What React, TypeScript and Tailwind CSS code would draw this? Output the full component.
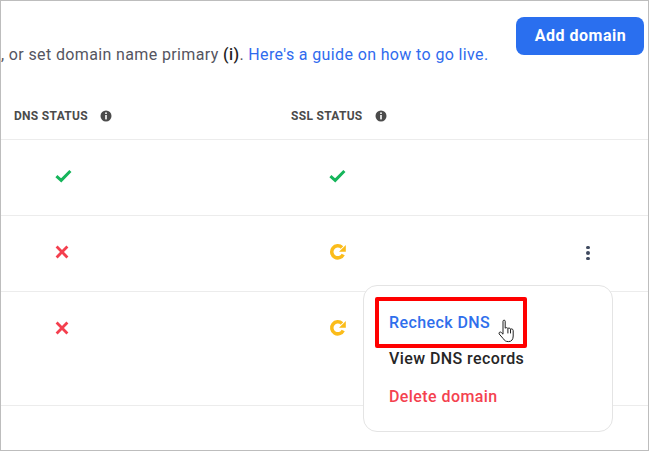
function InfoDot() {
  return (
    <svg width="12" height="12" viewBox="0 0 12 12" className="-mt-[1px] block">
      <circle cx="6" cy="6" r="5.5" fill="#4b4b4b" />
      <rect x="5.2" y="2.4" width="1.6" height="1.6" fill="#fff" />
      <rect x="5.2" y="5" width="1.6" height="4.4" fill="#fff" />
    </svg>
  );
}

function Check() {
  return (
    <svg width="18" height="14" viewBox="0 0 18 14" className="block">
      <path d="M1.4 7.2 L6.2 11.4 L15.4 2" fill="none" stroke="#16b55b" strokeWidth="3" />
    </svg>
  );
}

function Cross() {
  return (
    <svg width="14" height="14" viewBox="0 0 14 14" className="block">
      <path d="M1.6 1.6 L12.4 12.4 M12.4 1.6 L1.6 12.4" fill="none" stroke="#f43f4e" strokeWidth="2.8" />
    </svg>
  );
}

function Retry() {
  return (
    <svg width="18" height="18" viewBox="0 0 18 18" className="block">
      <path d="M14.2 11.4 A6 6 0 1 1 13 4.6" fill="none" stroke="#fbbc1a" strokeWidth="3.5" />
      <path d="M16.8 2 L16.8 8.8 L10 8.8 Z" fill="#fbbc1a" />
    </svg>
  );
}

function Kebab() {
  return (
    <div className="mt-[2px] flex flex-col gap-[2px]">
      <span className="h-[3.5px] w-[3.5px] rounded-full bg-[#3f4a5f]" />
      <span className="h-[3.5px] w-[3.5px] rounded-full bg-[#3f4a5f]" />
      <span className="h-[3.5px] w-[3.5px] rounded-full bg-[#3f4a5f]" />
    </div>
  );
}

function HandCursor() {
  return (
    <svg width="18" height="24" viewBox="0 0 18 24" className="block">
      <path
        d="M5 2.2 C5 .8 7.2 .8 7.2 2.2 L7.2 9.2 C7.8 8.4 9.6 8.4 9.9 9.6 C10.4 8.8 12.2 8.9 12.5 10.2 C13.1 9.6 15.2 9.8 15.2 11.6 L15.2 17 C15.2 20.4 13.6 22.6 10.6 22.6 C7.6 22.6 6.6 21.6 5.2 19.6 L1.2 15 C.4 13.8 2 12.2 3.2 13.4 L5 15.2 Z"
        fill="#fff"
        stroke="#222"
        strokeWidth="1"
        strokeLinejoin="round"
      />
      <path d="M9.9 9.6 V14.4 M12.5 10.2 V14.4" fill="none" stroke="#222" strokeWidth="1" />
    </svg>
  );
}

interface RowProps {
  dns: React.ReactNode;
  ssl: React.ReactNode;
  menu?: boolean;
  height: string;
}

function Row({ dns, ssl, menu, height }: RowProps) {
  return (
    <div className={`flex items-start border-b border-[#ececec] pt-[27px] ${height}`}>
      <div className="flex h-[18px] w-[328px] items-center pl-[54px]">{dns}</div>
      <div className="flex h-[18px] w-[257px] items-center">{ssl}</div>
      {menu && <div className="flex h-[18px] items-center"><Kebab /></div>}
    </div>
  );
}

export default function App() {
  return (
    <div className="relative h-[451px] w-[649px] overflow-hidden border border-[#bdbdbd] bg-white font-['Roboto',sans-serif]">
      <div className="flex h-[100px] items-start justify-between pr-[4px] pt-[16px]">
        <p className="mt-[27px] whitespace-nowrap text-[16px] leading-[22px] tracking-[0.37px] text-[#55555f]">
          , or set domain name primary <b className="font-medium text-[#222]">(i)</b>.{" "}
          <span className="text-[#2f6bee]">Here's a guide on how to go live.</span>
        </p>
        <button className="h-[38px] w-[128px] rounded-[8px] bg-[#2a6fef] pl-[1px] text-[16px] font-bold tracking-[0.5px] text-white">
          Add domain
        </button>
      </div>
      <div className="flex h-[39px] items-start border-b border-[#ececec] pl-[13px] pt-[6px] text-[12px] font-bold uppercase tracking-[0.3px] text-[#4b4b4b]">
        <div className="flex w-[277px] items-center gap-[12px]">
          <span>DNS Status</span>
          <InfoDot />
        </div>
        <div className="flex items-center gap-[12px]">
          <span>SSL Status</span>
          <InfoDot />
        </div>
      </div>
      <Row dns={<Check />} ssl={<Check />} height="h-[76px]" />
      <Row dns={<Cross />} ssl={<Retry />} menu height="h-[76px]" />
      <Row dns={<Cross />} ssl={<Retry />} height="h-[114px]" />

      <div className="absolute left-[362px] top-[284px] flex h-[147px] w-[250px] flex-col rounded-[14px] border border-[#e4e4e4] bg-white pl-[25px] pt-[26px] text-[16px] font-medium leading-[22px] tracking-[0.42px]">
        <span className="text-[#2f6fec]">Recheck DNS</span>
        <span className="mt-[14px] text-[#262626]">View DNS records</span>
        <span className="mt-[16px] text-[#f4424f]">Delete domain</span>
      </div>
      <div className="absolute left-[374px] top-[296px] h-[51px] w-[152px] rounded-[2px] border-4 border-[#ff0000]" />
      <div className="absolute left-[497px] top-[318px]">
        <HandCursor />
      </div>
    </div>
  );
}
